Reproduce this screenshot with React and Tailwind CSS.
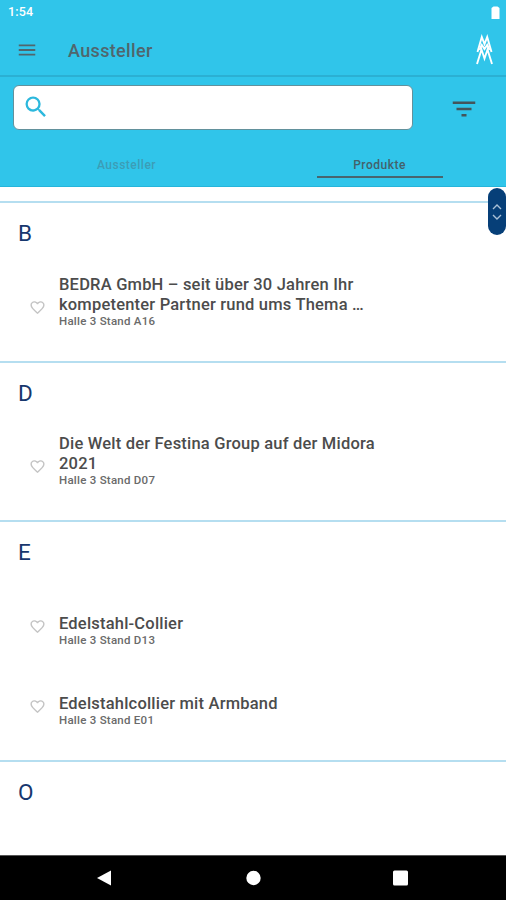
import { useState } from "react";
import { MdMenu, MdSearch, MdFilterList, MdFavoriteBorder } from "react-icons/md";

const sections = [
  {
    letter: "B",
    items: [
      { lines: ["BEDRA GmbH – seit über 30 Jahren Ihr", "kompetenter Partner rund ums Thema …"], place: "Halle 3 Stand A16" },
    ],
  },
  {
    letter: "D",
    items: [
      { lines: ["Die Welt der Festina Group auf der Midora", "2021"], place: "Halle 3 Stand D07" },
    ],
  },
  {
    letter: "E",
    items: [
      { lines: ["Edelstahl-Collier"], place: "Halle 3 Stand D13" },
      { lines: ["Edelstahlcollier mit Armband"], place: "Halle 3 Stand E01" },
    ],
  },
  { letter: "O", items: [] },
];

const Item = ({ item }) => (
  <li className="flex h-20 items-end pb-[33px] pl-[29px]">
    <button className="mb-[12px] h-[17px] w-[30px] shrink-0 text-[#c4c4c4]">
      <MdFavoriteBorder size={17} />
    </button>
    <div className="whitespace-nowrap">
      {item.lines.map((line) => (
        <p key={line} className="text-[16.5px] leading-[20px] font-medium tracking-[0.2px] text-[#4c4c4c]">{line}</p>
      ))}
      <p className="-mt-px text-[11.5px] leading-[14px] font-medium tracking-[0.25px] text-[#6a6a6a]">{item.place}</p>
    </div>
  </li>
);

const App = () => {
  const [search, setSearch] = useState("");

  return (
    <div className="flex h-[900px] w-[506px] flex-col overflow-hidden bg-white font-['Roboto',sans-serif]">
      <header className="h-[77px] shrink-0 border-b-2 border-[#2bb0d3] bg-[#30c5ea]">
        <div className="flex h-[25px] items-center justify-between pr-[6px] pl-2 text-[12.5px] font-medium tracking-[0.2px] text-white">
          <span>1:54</span>
          <svg width="9" height="13" viewBox="0 0 9 13" fill="white">
            <path d="M2.5 0.5h4l2 1.5V13h-8V2z" />
          </svg>
        </div>
        <div className="flex h-[50px] items-center pr-[12px] pl-4">
          <MdMenu size={22} className="text-[#50666d]" />
          <h1 className="ml-[30px] flex-1 text-[18px] font-medium tracking-[0.35px] text-[#50666d]">Aussteller</h1>
          <svg width="19" height="32" viewBox="0 0 19 32" fill="none" stroke="white" strokeWidth="1.9">
            <path d="M2.5 18L6.8 3L9.5 10L12.2 3L16.5 18" />
            <path d="M4.5 16L6.8 11L9.5 15L12.2 11L14.5 16" />
            <path d="M2 30L6.5 15.5L9.5 24.5L12.5 15.5L17 30" />
          </svg>
        </div>
      </header>

      <div className="h-[110px] shrink-0 border-b border-[#25b5db] bg-[#30c5ea]">
        <div className="flex pt-2 pl-[13px]">
          <label className="flex h-[45px] w-[400px] items-center rounded-[6px] border border-[#62919c] bg-white pl-[8px]">
            <MdSearch size={28} className="-mt-px text-[#2cb8dd]" />
            <input
              value={search}
              onChange={(e) => setSearch(e.target.value)}
              className="min-w-0 flex-1 outline-none"
            />
          </label>
          <button className="mt-[2px] ml-[36px] text-[#43555b]">
            <MdFilterList size={30} />
          </button>
        </div>
        <nav className="grid grid-cols-2 pt-[22px] text-[12px] font-medium tracking-[0.5px]">
          <button className="h-[27px] pb-[2px] text-[#3c9db6]">Aussteller</button>
          <button className="mx-auto flex h-[26px] w-[126px] justify-center border-b-2 border-[#48656e] pt-[4px] text-[#44616b]">
            Produkte
          </button>
        </nav>
      </div>

      <main className="relative flex-1 overflow-hidden pt-[14px]">
        {sections.map((section) => (
          <section key={section.letter}>
            <div className="-mb-px h-[80.5px] border-t-2 border-[#b5def0] pt-[16px] pl-[18px]">
              <h2 className="text-[22.5px] leading-[29px] text-[#17376e]">{section.letter}</h2>
            </div>
            <ul>
              {section.items.map((item) => (
                <Item key={item.place} item={item} />
              ))}
            </ul>
          </section>
        ))}
        <div className="absolute top-px right-0 flex h-[47px] w-[18px] items-center justify-center rounded-[9px] bg-[#063f78]">
          <svg width="10" height="18" viewBox="0 0 10 18" fill="none" stroke="#a9c0d6" strokeWidth="1.4">
            <path d="M1 6l4-4l4 4M1 12l4 4l4-4" />
          </svg>
        </div>
      </main>

      <footer className="flex h-[45px] shrink-0 items-center border-t border-[#555] bg-black">
        <svg width="506" height="16" viewBox="0 0 506 16" fill="white">
          <path d="M97 8L111 0.5v15z" />
          <circle cx="253.5" cy="8" r="7.2" />
          <rect x="393" y="0.5" width="15" height="15" rx="1.5" />
        </svg>
      </footer>
    </div>
  );
};

export default App;
